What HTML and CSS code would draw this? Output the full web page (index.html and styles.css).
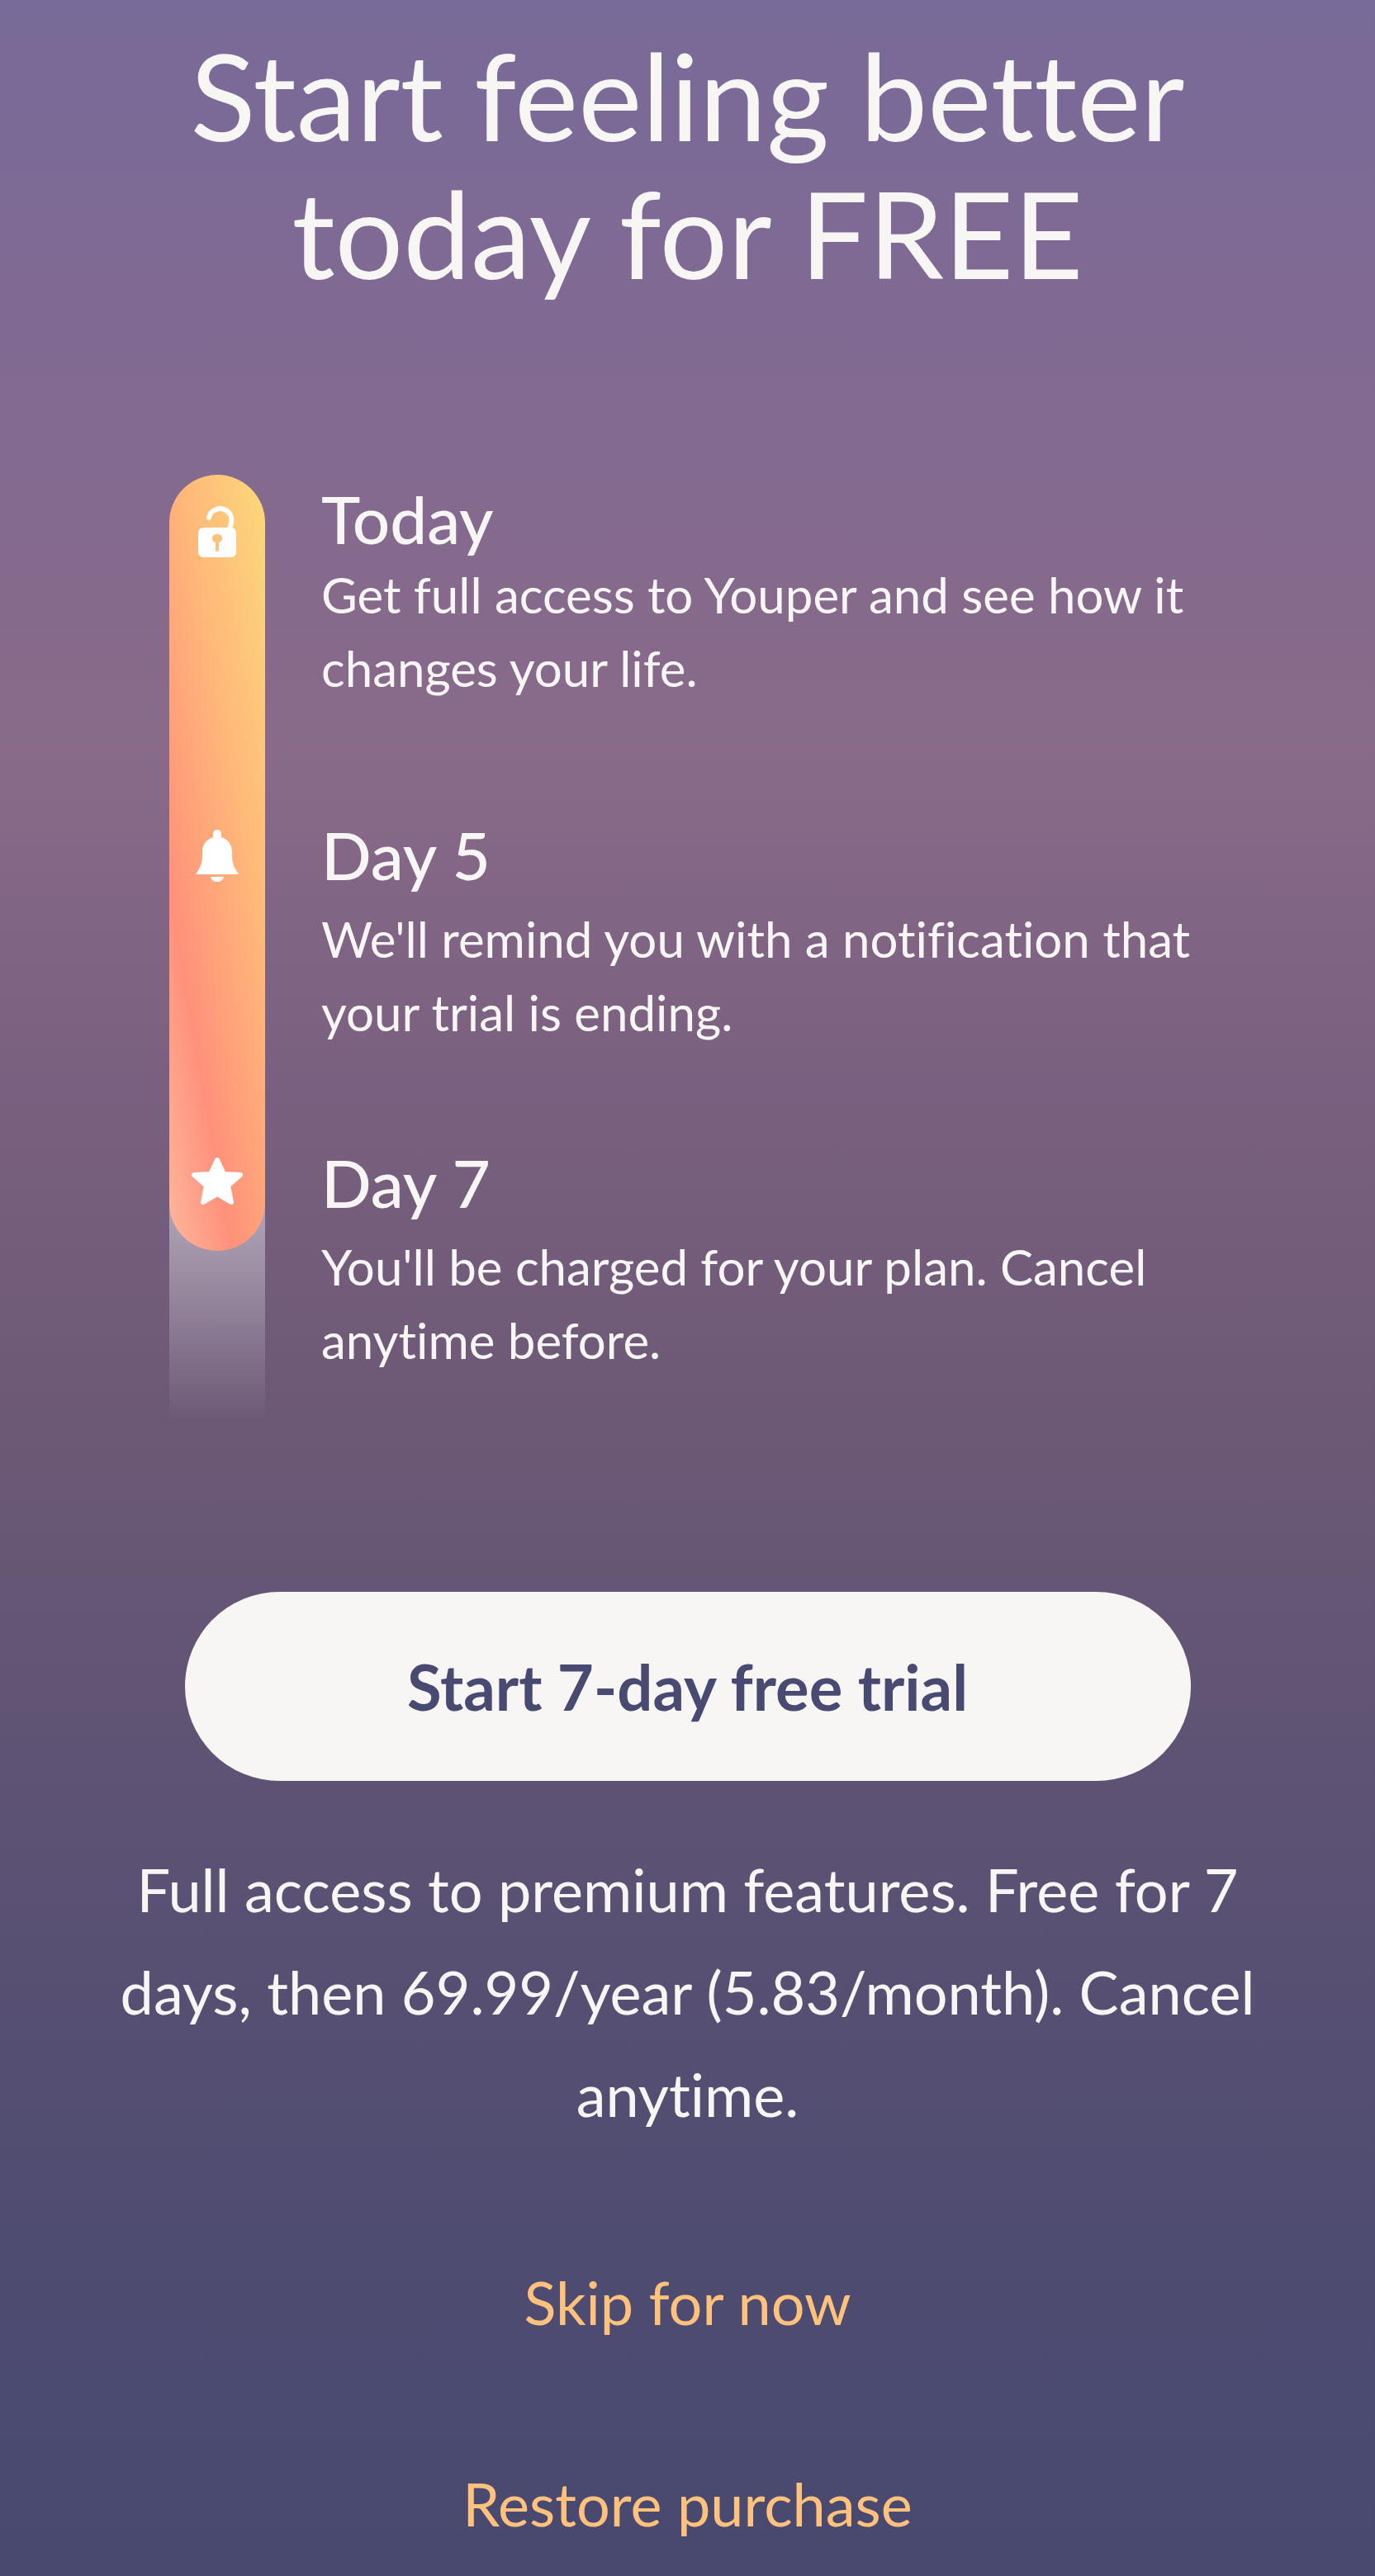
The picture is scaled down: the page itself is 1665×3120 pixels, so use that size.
FILE: index.html
```html
<!DOCTYPE html>
<html lang="en">
<head>
  <title>Start feeling better today for FREE</title>
  <meta charset="utf-8">
  <meta name="viewport" content="width=device-width, initial-scale=1">
  <link rel="stylesheet" href="styles.css">
</head>
<body>
  <main class="paywall">
    <h1 class="title">Start feeling better<br>today for FREE</h1>

    <ol class="timeline">
      <li class="step">
        <svg class="step-icon" viewBox="0 0 64 64" aria-hidden="true">
          <path d="M22 15C24 5 36 1 44 7C51 12 50 21 47 28" fill="none" stroke="currentColor" stroke-width="6" stroke-linecap="round"/>
          <path fill="currentColor" fill-rule="evenodd" d="M16 27H48Q55 27 55 34V56Q55 63 48 63H16Q9 63 9 56V34Q9 27 16 27ZM32 35A5 5 0 0 0 30 45V54Q30 56 32 56T34 54V45A5 5 0 0 0 32 35Z"/>
        </svg>
        <div class="step-text">
          <h2 class="step-title">Today</h2>
          <p class="step-info">Get full access to Youper and see how it changes your life.</p>
        </div>
      </li>
      <li class="step">
        <svg class="step-icon" viewBox="0 0 64 64" aria-hidden="true">
          <path fill="currentColor" d="M32 0C35 0 37 2 37 5V9C46 12 50 19 50 27V32C50 43 54 47 58 54H6C10 47 14 43 14 32V27C14 19 18 12 27 9V5C27 2 29 0 32 0ZM24 57H40C39 61 36 63 32 63S25 61 24 57Z"/>
        </svg>
        <div class="step-text">
          <h2 class="step-title">Day 5</h2>
          <p class="step-info">We'll remind you with a notification that your trial is ending.</p>
        </div>
      </li>
      <li class="step">
        <svg class="step-icon" viewBox="0 0 64 64" aria-hidden="true">
          <path fill="currentColor" stroke="currentColor" stroke-width="6" stroke-linejoin="round" d="M32 3L40 20L60 21L45 34L49 54L32 44L15 54L19 34L4 21L24 20Z"/>
        </svg>
        <div class="step-text">
          <h2 class="step-title">Day 7</h2>
          <p class="step-info">You'll be charged for your plan. Cancel anytime before.</p>
        </div>
      </li>
    </ol>

    <button class="start" type="button">Start 7-day free trial</button>
    <p class="terms">Full access to premium features. Free for 7 days, then 69.99/year (5.83/month). Cancel anytime.</p>
    <a class="link" href="#">Skip for now</a>
    <a class="link" href="#">Restore purchase</a>
  </main>
</body>
</html>
```

FILE: styles.css
```css
*, *::before, *::after {
  margin: 0;
  padding: 0;
  box-sizing: border-box;
}

body {
  min-height: 100vh;
  background: linear-gradient(#786a99 0%, #806a93 12%, #896a89 29%, #7a6080 42%, #6c5976 55%, #5f5374 68%, #534e72 81%, #4b4a70 93%, #49496f 100%);
  color: #f8f6f5;
  font-family: "Lato", sans-serif;
  font-variant-ligatures: none;
}

.paywall {
  display: flex;
  flex-direction: column;
  align-items: center;
  padding: 31px 140px 0;
}

.title {
  font-size: 146px;
  font-weight: 400;
  line-height: 167px;
  text-align: center;
}

.timeline {
  display: grid;
  width: 100%;
  max-width: 1255px;
  margin-top: 210px;
  padding-bottom: 52px;
  list-style: none;
}

/* fading tail */
.timeline::before {
  content: "";
  grid-area: 1 / 1 / 4 / 2;
  width: 116px;
  margin: 860px 0 -52px;
  background: linear-gradient(rgba(210, 205, 215, 0.7), rgba(210, 205, 215, 0));
}

/* colored bar */
.timeline::after {
  content: "";
  grid-area: 1 / 1 / 4 / 2;
  width: 116px;
  margin-bottom: 153px;
  border-radius: 58px;
  background: linear-gradient(80deg, #ffb69e 0%, #ff917b 27%, #ffb87a 64%, #fbd97a 100%);
}

.step {
  z-index: 1;
  grid-column: 1;
  display: grid;
  grid-template-columns: 116px 1fr;
  column-gap: 68px;
  align-items: start;
  padding-bottom: 113px;
}

.step:first-child {
  grid-row: 1;
  padding-top: 5px;
  padding-bottom: 133px;
}

.step:nth-child(2) {
  grid-row: 2;
}

.step:last-child {
  grid-row: 3;
  padding-bottom: 0;
}

.step-icon {
  justify-self: center;
  width: 64px;
  height: 64px;
  margin-top: 18px;
  color: #ffffff;
}

.step:first-child .step-icon {
  margin-top: 32px;
}

.step-title {
  font-size: 80px;
  font-weight: 500;
  line-height: 96px;
}

.step-info {
  margin-top: 10px;
  font-size: 60px;
  line-height: 89px;
}

.step:first-child .step-info {
  margin-top: 0;
}

.start {
  width: 100%;
  max-width: 1218px;
  height: 229px;
  margin-top: 208px;
  border: 0;
  border-radius: 115px;
  background-color: #f8f6f5;
  color: #494a72;
  font-family: inherit;
  font-size: 76px;
  font-weight: 700;
  cursor: pointer;
}

.terms {
  margin-top: 69px;
  font-size: 72px;
  line-height: 124px;
  text-align: center;
}

.link {
  margin-top: 120px;
  color: #ffc27d;
  font-size: 72px;
  line-height: 124px;
  text-decoration: none;
}

.terms + .link {
  margin-top: 128px;
}
```
